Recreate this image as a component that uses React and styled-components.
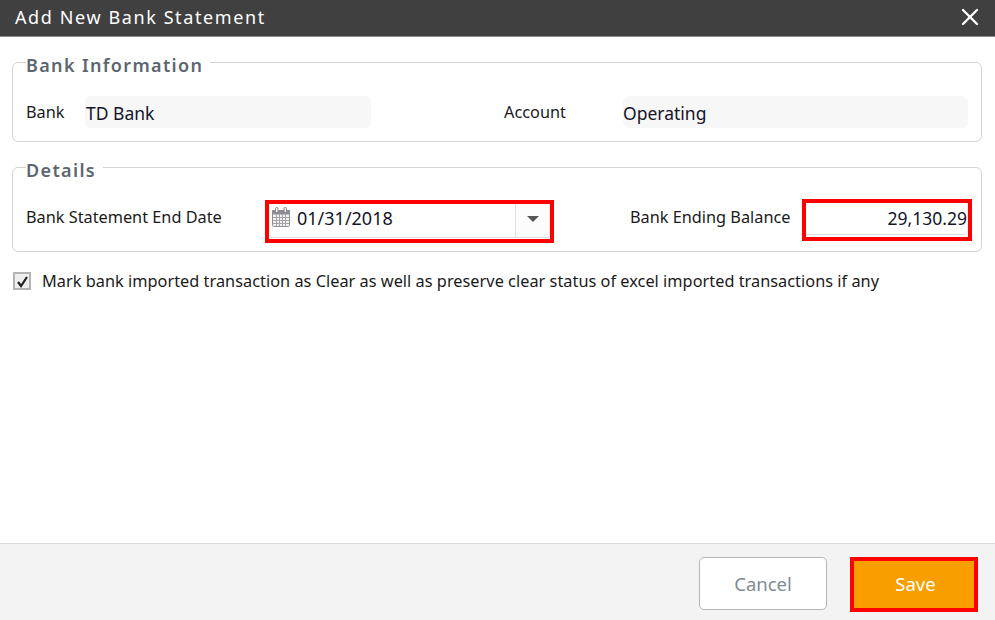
import styled, { createGlobalStyle } from "styled-components";
import { X } from "lucide-react";

const GlobalStyle = createGlobalStyle`
  html, body {
    margin: 0;
    padding: 0;
    background: #fff;
    font-family: "Noto Sans", "Open Sans", sans-serif;
  }
  * {
    box-sizing: border-box;
  }
`;

const Dialog = styled.div`
  width: 995px;
  height: 620px;
  display: flex;
  flex-direction: column;
  overflow: hidden;
`;

const Header = styled.header`
  height: 37px;
  flex: none;
  display: flex;
  align-items: center;
  justify-content: space-between;
  padding: 0 11px 3px 15px;
  background: #404041;
  border-bottom: 1px solid #8a8a8a;
  color: #fff;
`;

const Title = styled.h1`
  margin: 0;
  font-size: 18px;
  font-weight: 400;
  letter-spacing: 1.6px;
`;

const Body = styled.main`
  flex: 1;
  padding: 0 13px 0 12px;
`;

const Section = styled.fieldset`
  margin: 10px 0 0;
  padding: 0 13px;
  height: ${(p) => p.$height}px;
  border: 1px solid #d4d4d4;
  border-radius: 6px;
  min-width: 0;
`;

const Legend = styled.legend`
  padding: 6px 7px 0 0;
  font-size: 18px;
  line-height: 24px;
  font-weight: 600;
  letter-spacing: 1.35px;
  color: #5d6670;
`;

const Row = styled.div`
  display: flex;
  align-items: flex-start;
  margin-top: ${(p) => p.$top}px;
`;

const Label = styled.label`
  flex: none;
  width: ${(p) => p.$width}px;
  margin-top: ${(p) => p.$top}px;
  margin-left: ${(p) => p.$left || 0}px;
  font-size: 16.3px;
  line-height: 22px;
  color: #1a1a1a;
`;

const ReadOnlyValue = styled.div`
  flex: none;
  width: ${(p) => p.$width}px;
  height: 32px;
  display: flex;
  align-items: center;
  padding: 2px 0 0 ${(p) => p.$indent || 0}px;
  border-radius: 6px;
  background: #f7f7f7;
  font-size: 17.5px;
  color: #14142a;
`;

const Highlight = styled.div`
  flex: none;
  width: ${(p) => p.$width}px;
  height: ${(p) => p.$height}px;
  margin-top: ${(p) => p.$top || 0}px;
  border: 4px solid #fe0000;
  background: #fff;
`;

const DateField = styled.div`
  height: 34px;
  display: flex;
  align-items: center;
  border-bottom: 1px solid #dedede;
  border-right: 1px solid #eeeeee;
  border-radius: 0 0 4px 0;
`;

const DateText = styled.span`
  flex: 1;
  padding: 0 0 5px 7px;
  font-size: 18px;
  color: #14142a;
`;

const CalendarIcon = styled.svg`
  flex: none;
  margin: 0 0 7px 3px;
  width: 18px;
  height: 20px;
`;

const DropButton = styled.div`
  flex: none;
  width: 34px;
  height: 100%;
  display: flex;
  align-items: center;
  justify-content: center;
  padding-bottom: 3px;
  background: #fcfcfc;
  border-left: 1px solid #e2e2e2;
  border-radius: 0 0 4px 0;

  &::after {
    content: "";
    border-left: 6px solid transparent;
    border-right: 6px solid transparent;
    border-top: 6px solid #555;
  }
`;

const BalanceField = styled.div`
  height: 32px;
  display: flex;
  align-items: center;
  justify-content: flex-end;
  padding-bottom: 2px;
  border-bottom: 1px solid #dedede;
  border-right: 1px solid #eeeeee;
  border-radius: 0 0 4px 0;
  font-size: 17.5px;
  color: #14142a;
`;

const CheckRow = styled.div`
  display: flex;
  align-items: center;
  margin-top: 20px;
`;

const CheckBox = styled.span`
  flex: none;
  width: 18px;
  height: 18px;
  display: flex;
  align-items: center;
  justify-content: center;
  margin: 0 11px 0 1px;
  background: #efefef;
  border: 2px solid #b3b3b3;
`;

const CheckText = styled.span`
  font-size: 16.3px;
  line-height: 18px;
  letter-spacing: 0.03px;
  color: #1a1a1a;
`;

const Footer = styled.footer`
  height: 77px;
  flex: none;
  display: flex;
  justify-content: flex-end;
  gap: 23px;
  padding: 13px 17px 0 0;
  background: #f3f3f3;
  border-top: 1px solid #d9d9d9;
`;

const CancelButton = styled.button`
  width: 128px;
  height: 53px;
  background: #fff;
  border: 1px solid #b5b5b5;
  border-radius: 5px;
  font: inherit;
  font-size: 18.5px;
  color: #808b96;
`;

const SaveButton = styled.button`
  width: 128px;
  height: 55px;
  padding: 0 0 2px 3px;
  background: #f89e00;
  border: 4px solid #fe0000;
  font: inherit;
  font-size: 18.5px;
  color: #fff;
`;

const Calendar = () => (
  <CalendarIcon viewBox="0 0 18 20">
    <rect x="0.5" y="3.5" width="17" height="16" rx="1" fill="#f4f0ee" stroke="#8a8f99" />
    <rect x="0.5" y="3.5" width="17" height="3.5" fill="#8d8a92" stroke="#8a8f99" />
    <path
      d="M1 10.5h16M1 13.5h16M1 16.5h16M4.5 7v12M7.5 7v12M10.5 7v12M13.5 7v12"
      stroke="#a5a3aa"
      strokeWidth="1"
      fill="none"
    />
    <rect x="3.5" y="0.5" width="2.5" height="5" rx="1.2" fill="#fff" stroke="#8a7d78" />
    <rect x="12" y="0.5" width="2.5" height="5" rx="1.2" fill="#fff" stroke="#8a7d78" />
  </CalendarIcon>
);

export default function App() {
  return (
    <>
      <GlobalStyle />
      <Dialog>
        <Header>
          <Title>Add New Bank Statement</Title>
          <X size={28} color="#fff" strokeWidth={2} />
        </Header>
        <Body>
          <Section $height={95}>
            <Legend>Bank Information</Legend>
            <Row $top={19}>
              <Label $width={59} $top={5}>Bank</Label>
              <ReadOnlyValue $width={286} $indent={1}>TD Bank</ReadOnlyValue>
              <Label $width={119} $top={5} $left={133}>Account</Label>
              <ReadOnlyValue $width={345}>Operating</ReadOnlyValue>
            </Row>
          </Section>
          <Section $height={100}>
            <Legend>Details</Legend>
            <Row $top={18}>
              <Label $width={239} $top={6}>Bank Statement End Date</Label>
              <Highlight $width={289} $height={43}>
                <DateField>
                  <Calendar />
                  <DateText>01/31/2018</DateText>
                  <DropButton />
                </DateField>
              </Highlight>
              <Label $width={172} $top={6} $left={76}>Bank Ending Balance</Label>
              <Highlight $width={170} $height={42} $top={-1}>
                <BalanceField>29,130.29</BalanceField>
              </Highlight>
            </Row>
          </Section>
          <CheckRow>
            <CheckBox>
              <svg width="13" height="13" viewBox="0 0 13 13">
                <path d="M2 7 L5 11 L11 2" fill="none" stroke="#222" strokeWidth="2.2" />
              </svg>
            </CheckBox>
            <CheckText>
              Mark bank imported transaction as Clear as well as preserve clear status of excel imported transactions if any
            </CheckText>
          </CheckRow>
        </Body>
        <Footer>
          <CancelButton>Cancel</CancelButton>
          <SaveButton>Save</SaveButton>
        </Footer>
      </Dialog>
    </>
  );
}
